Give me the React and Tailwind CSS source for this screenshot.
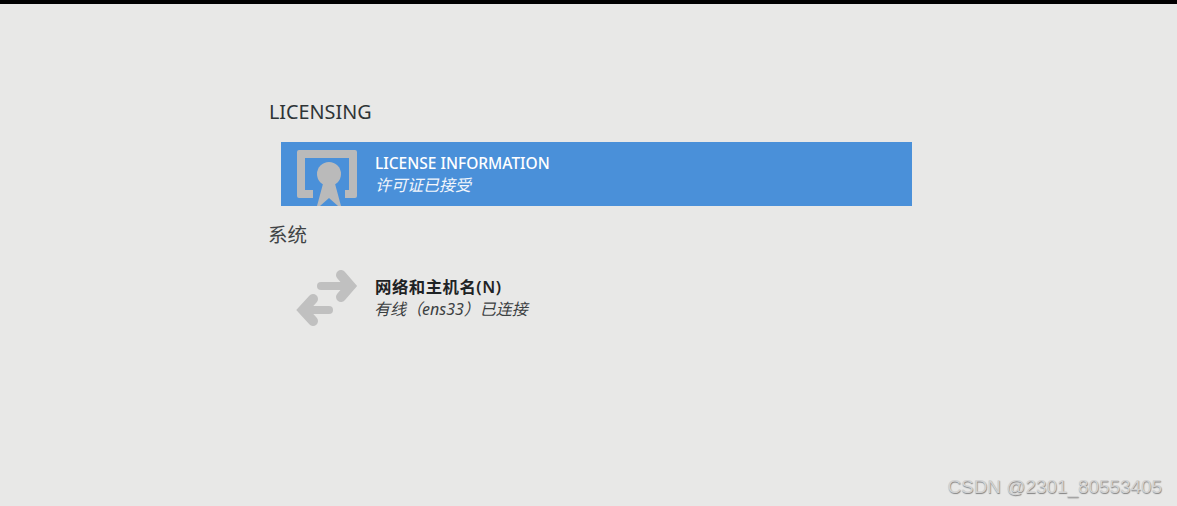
const FONT = "font-['Noto_Sans','Noto_Sans_CJK_SC',sans-serif]";

function LicenseIcon() {
  return (
    <svg width="60" height="56" viewBox="0 0 60 56" className="block shrink-0">
      <path
        fill="#bababa"
        d="M2 0H58a2 2 0 0 1 2 2V46a2 2 0 0 1-2 2H48V40H52V8H8V40H16V48H2a2 2 0 0 1-2-2V2a2 2 0 0 1 2-2z"
      />
      <circle cx="32" cy="24" r="12" fill="#bababa" />
      <path fill="#bababa" d="M27 30H37L44 56H41L32 48L23 56H20z" />
    </svg>
  );
}

function NetworkIcon() {
  return (
    <svg width="62" height="58" viewBox="0 0 62 58" className="block shrink-0" fill="none" stroke="#c0c0c0" strokeWidth="8" strokeLinecap="round">
      <path d="M25 17H52" />
      <path strokeWidth="10" d="M45 6L54.5 17L45 28" />
      <path d="M33 41H8" />
      <path strokeWidth="10" d="M17 30L7 41L17 52" />
    </svg>
  );
}

function Row({ icon, iconClass, title, titleClass, status, selected }) {
  return (
    <div className={`ml-3 flex h-16 w-[631px] items-center overflow-hidden pl-4 ${selected ? 'bg-[#4a90d9]' : ''}`}>
      <div className={`flex h-16 w-[78px] items-start ${iconClass}`}>{icon}</div>
      <div className="flex flex-col">
        <div className={`leading-[22px] ${titleClass}`}>{title}</div>
        <div className={`text-[16px] leading-[22px] italic ${selected ? 'text-[#f2f6fc]' : 'text-[#3c4042]'}`}>{status}</div>
      </div>
    </div>
  );
}

export default function App() {
  return (
    <div className={`relative h-[506px] w-[1177px] overflow-hidden bg-[#e8e8e7] ${FONT}`}>
      <div className="h-1 bg-black" />
      <div className="pl-[269px] pt-[94px]">
        <h2 className="mb-[16px] text-[19.8px] leading-[28px] text-[#2e3436]">LICENSING</h2>
        <Row
          selected
          icon={<LicenseIcon />}
          iconClass="pt-2"
          title="LICENSE INFORMATION"
          titleClass="text-[15.5px] font-medium text-white"
          status="许可证已接受"
        />
        <h2 className="-ml-px mt-[15px] mb-[17px] text-[19.5px] leading-[28px] text-[#3f4345]">系统</h2>
        <Row
          icon={<NetworkIcon />}
          iconClass="pt-[3px] -ml-px"
          title="网络和主机名(N)"
          titleClass="text-[16.4px] tracking-[0.5px] font-semibold text-[#1f2325] ml-px"
          status="有线（ens33）已连接"
        />
      </div>
      <div className="absolute right-[15px] bottom-[8px] font-['Liberation_Sans',sans-serif] text-[18.9px] leading-[22px] text-[#d2d2d2] [text-shadow:0.5px_0.5px_1px_#808080]">
        CSDN @2301_80553405
      </div>
    </div>
  );
}
